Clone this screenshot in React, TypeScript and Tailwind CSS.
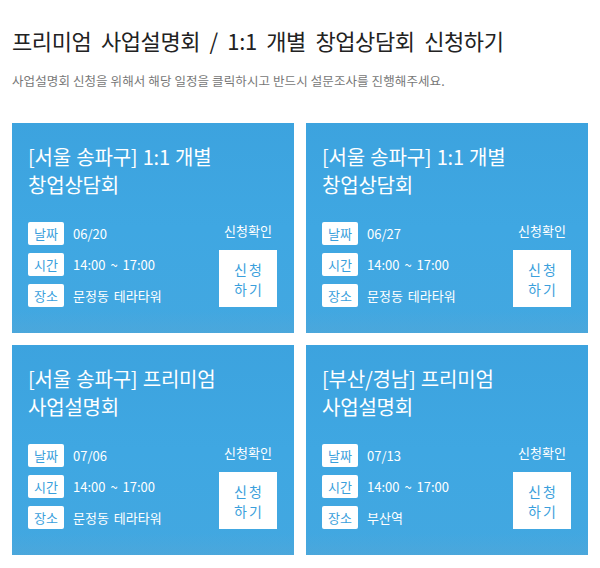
import React from 'react'

type Session = {
  title: [string, string]
  date: string
  time: string
  place: string
}

const sessions: Session[] = [
  { title: ['[서울 송파구] 1:1 개별', '창업상담회'], date: '06/20', time: '14:00 ~ 17:00', place: '문정동 테라타워' },
  { title: ['[서울 송파구] 1:1 개별', '창업상담회'], date: '06/27', time: '14:00 ~ 17:00', place: '문정동 테라타워' },
  { title: ['[서울 송파구] 프리미엄', '사업설명회'], date: '07/06', time: '14:00 ~ 17:00', place: '문정동 테라타워' },
  { title: ['[부산/경남] 프리미엄', '사업설명회'], date: '07/13', time: '14:00 ~ 17:00', place: '부산역' },
]

const Row = ({ label, value }: { label: string; value: string }) => (
  <div className="flex items-center gap-[9px]">
    <span className="flex h-[23px] w-[36px] items-center justify-center rounded-[2px] bg-white text-[13px] text-[#3a9fdc]">
      {label}
    </span>
    <span className="text-[13px] text-white [word-spacing:2px]">{value}</span>
  </div>
)

const Card = ({ s }: { s: Session }) => (
  <section className="relative h-[210px] overflow-hidden bg-[#3fa7e2] px-4 pt-5">
    {/* faint sky / runway backdrop */}
    <div className="pointer-events-none absolute inset-0 bg-gradient-to-b from-[#3a9fdb]/50 via-transparent to-[#47a8de]/40"></div>
    <div className="pointer-events-none absolute inset-x-0 bottom-0 h-[22px] bg-gradient-to-b from-transparent to-[#5fa6d0]/30"></div>

    <div className="relative">
      <h2 className="text-[20px] leading-[28px] tracking-[-0.2px] text-white [word-spacing:1px]">
        {s.title[0]}
        <br />
        {s.title[1]}
      </h2>

      <div className="mt-[23px] flex items-end justify-between">
        <div className="flex flex-col gap-[8px]">
          <Row label="날짜" value={s.date} />
          <Row label="시간" value={s.time} />
          <Row label="장소" value={s.place} />
        </div>
        <div className="mr-[1px] flex w-[58px] flex-col items-center">
          <div className="whitespace-nowrap text-[13px] leading-[18px] text-white">신청확인</div>
          <button className="mt-[10px] flex h-[57px] w-[58px] items-center justify-center bg-white pl-[2px] text-center text-[14px] leading-[20px] tracking-[2px] text-[#3a9fdc]">
            신청
            <br />
            하기
          </button>
        </div>
      </div>
    </div>
  </section>
)

export default function App() {
  return (
    <main
      className="min-h-[568px] w-[600px] bg-white px-3 pt-[24px]"
      style={{ fontFamily: '"Noto Sans CJK KR", "Noto Sans", sans-serif' }}
    >
      <h1 className="text-[22px] leading-[32px] tracking-[-0.4px] text-[#222] [word-spacing:5px]">
        프리미엄 사업설명회 / 1:1 개별 창업상담회 신청하기
      </h1>
      <p className="mt-[16px] text-[12.5px] leading-[18px] tracking-[0.1px] text-[#777]">
        사업설명회 신청을 위해서 해당 일정을 클릭하시고 반드시 설문조사를 진행해주세요.
      </p>

      <div className="mt-[33px] grid grid-cols-2 gap-3">
        {sessions.map((s, i) => (
          <Card key={i} s={s} />
        ))}
      </div>
    </main>
  )
}
